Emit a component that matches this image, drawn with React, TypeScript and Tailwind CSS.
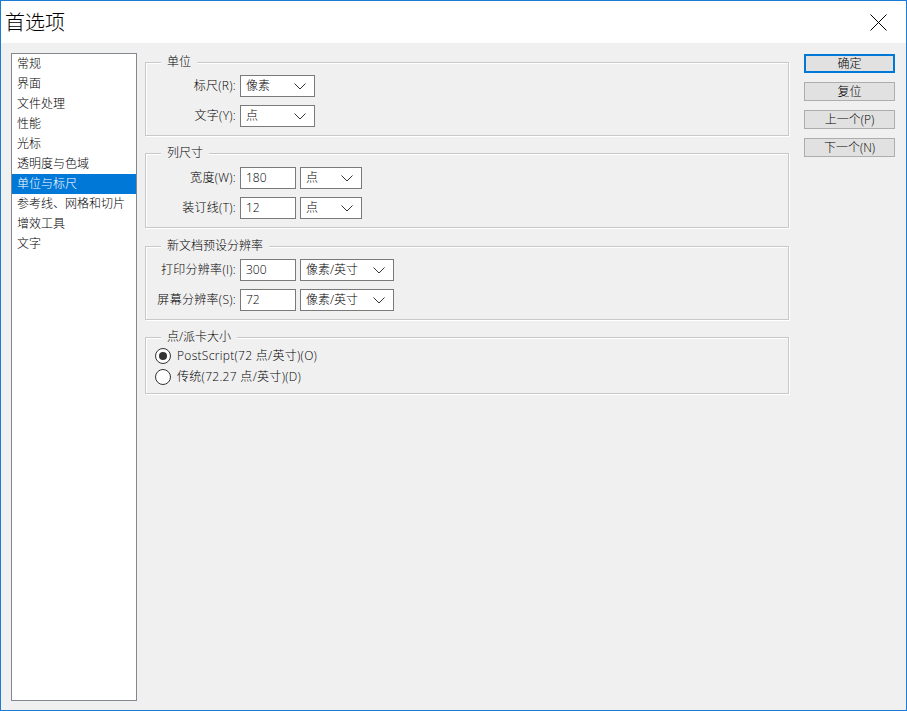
import React from "react";

const items = [
  "常规",
  "界面",
  "文件处理",
  "性能",
  "光标",
  "透明度与色域",
  "单位与标尺",
  "参考线、网格和切片",
  "增效工具",
  "文字",
];

function Chevron() {
  return (
    <svg width="12" height="7" viewBox="0 0 12 7" className="shrink-0">
      <polyline points="0.5,0.5 6,6 11.5,0.5" fill="none" stroke="#333" strokeWidth="1" />
    </svg>
  );
}

function Select({ value, w }: { value: string; w: string }) {
  return (
    <div className={`${w} h-[22px] bg-white border border-[#7a7a7a] flex items-center justify-between pl-[5px] pr-[8px]`}>
      <span className="leading-[20px]">{value}</span>
      <Chevron />
    </div>
  );
}

function Input({ value }: { value: string }) {
  return (
    <div className="w-[56px] h-[22px] bg-white border border-[#7a7a7a] flex items-center pl-[5px]">
      <span className="leading-[20px]">{value}</span>
    </div>
  );
}

function Group({
  title,
  className,
  children,
}: {
  title: string;
  className: string;
  children: React.ReactNode;
}) {
  return (
    <div
      className={`relative border border-[#c8c8c8] shadow-[1px_1px_0_#ffffff,inset_1px_1px_0_#ffffff] ${className}`}
    >
      <div className="absolute left-[15px] top-[-11px] px-[6px] bg-[#f0f0f0] leading-[20px]">{title}</div>
      {children}
    </div>
  );
}

function Row({ label, children }: { label: string; children: React.ReactNode }) {
  return (
    <div className="flex items-center h-[22px]">
      <div className="w-[90px] text-right mr-[4px] leading-[20px] whitespace-nowrap tracking-[0.3px]">{label}</div>
      {children}
    </div>
  );
}

function Radio({ checked, label }: { checked: boolean; label: string }) {
  return (
    <div className="flex items-center h-[21px] pl-[9px]">
      <div className="w-[16px] h-[16px] rounded-full border border-[#333] bg-white flex items-center justify-center">
        {checked && <div className="w-[8px] h-[8px] rounded-full bg-[#333]" />}
      </div>
      <span className="ml-[6px] leading-[20px] tracking-[0.3px]">{label}</span>
    </div>
  );
}

function Btn({ label, primary }: { label: string; primary?: boolean }) {
  return (
    <div
      className={`w-[91px] h-[19px] flex items-center justify-center leading-[17px] bg-[#e1e1e1] ${
        primary ? "border-2 border-[#0078d7]" : "border border-[#adadad]"
      }`}
    >
      {label}
    </div>
  );
}

export default function App() {
  return (
    <div className="w-[907px] h-[711px] border border-[#1c7cd5] bg-[#f0f0f0] flex flex-col text-[12px] leading-[20px] text-black font-light font-['Open_Sans','Noto_Sans_CJK_SC',sans-serif]">
      <div className="h-[42px] shrink-0 bg-white flex items-center justify-between pl-[4px] pr-[19px]">
        <span className="text-[20px] leading-[28px] font-['Noto_Sans_CJK_SC',sans-serif]">首选项</span>
        <svg width="17" height="17" viewBox="0 0 17 17">
          <line x1="0.5" y1="0.5" x2="16.5" y2="16.5" stroke="#000" strokeWidth="1" />
          <line x1="16.5" y1="0.5" x2="0.5" y2="16.5" stroke="#000" strokeWidth="1" />
        </svg>
      </div>
      <div className="flex-1 flex pt-[10px] pl-[10px] pb-[9px]">
        <div className="w-[126px] border border-[#828790] bg-white">
          {items.map((it) => (
            <div
              key={it}
              className={`h-[20px] pl-[5px] leading-[20px] whitespace-nowrap ${
                it === "单位与标尺" ? "bg-[#0078d7] text-white" : ""
              }`}
            >
              {it}
            </div>
          ))}
        </div>
        <div className="ml-[8px] w-[644px] pt-[9px] flex flex-col">
          <Group title="单位" className="pt-[12px] pb-[8px] flex flex-col gap-[8px]">
            <Row label="标尺(R):">
              <Select value="像素" w="w-[75px]" />
            </Row>
            <Row label="文字(Y):">
              <Select value="点" w="w-[75px]" />
            </Row>
          </Group>
          <Group title="列尺寸" className="mt-[17px] pt-[13px] pb-[8px] flex flex-col gap-[8px]">
            <Row label="宽度(W):">
              <Input value="180" />
              <div className="ml-[4px]">
                <Select value="点" w="w-[62px]" />
              </div>
            </Row>
            <Row label="装订线(T):">
              <Input value="12" />
              <div className="ml-[4px]">
                <Select value="点" w="w-[62px]" />
              </div>
            </Row>
          </Group>
          <Group title="新文档预设分辨率" className="mt-[18px] pt-[12px] pb-[8px] flex flex-col gap-[8px]">
            <Row label="打印分辨率(I):">
              <Input value="300" />
              <div className="ml-[4px]">
                <Select value="像素/英寸" w="w-[94px]" />
              </div>
            </Row>
            <Row label="屏幕分辨率(S):">
              <Input value="72" />
              <div className="ml-[4px]">
                <Select value="像素/英寸" w="w-[94px]" />
              </div>
            </Row>
          </Group>
          <Group title="点/派卡大小" className="mt-[17px] pt-[7px] pb-[6px] flex flex-col">
            <Radio checked label="PostScript(72 点/英寸)(O)" />
            <Radio checked={false} label="传统(72.27 点/英寸)(D)" />
          </Group>
        </div>
        <div className="ml-[15px] mt-[1px] flex flex-col gap-[9px]">
          <Btn label="确定" primary />
          <Btn label="复位" />
          <Btn label="上一个(P)" />
          <Btn label="下一个(N)" />
        </div>
      </div>
    </div>
  );
}
